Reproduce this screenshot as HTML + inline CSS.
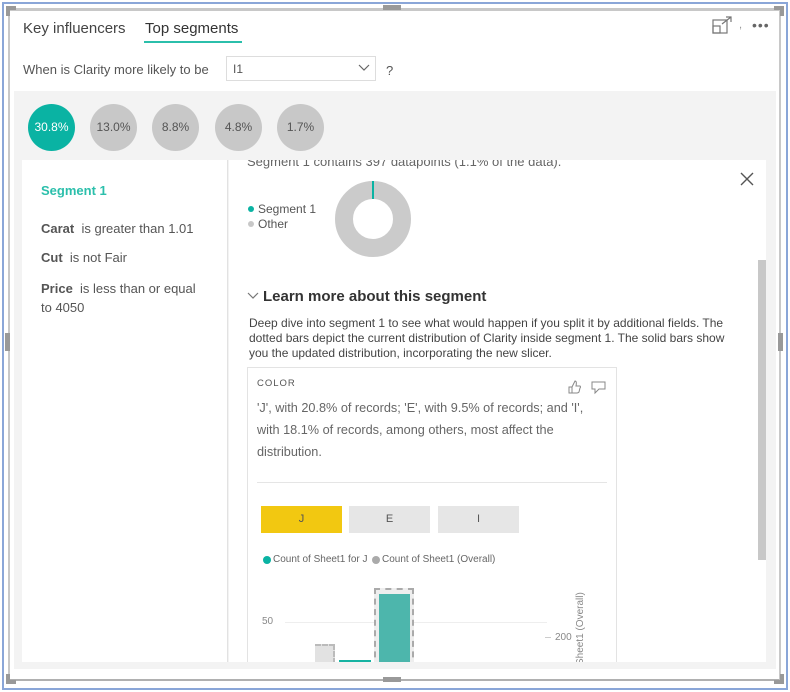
<!DOCTYPE html>
<html><head><style>
*{margin:0;padding:0;box-sizing:border-box}
body{width:790px;height:692px;background:#fff;position:relative;overflow:hidden;font-family:"Liberation Sans",sans-serif;color:#555}
.a{position:absolute}
.t{font-size:12px;white-space:nowrap}
</style></head><body>
<div class="a" style="left:2px;top:2px;width:786px;height:688px;border:2px solid #8aa6d8"></div>
<div class="a" style="left:8px;top:8px;width:773px;height:673px;border-top:3px solid #c8c8c8;border-left:2px solid #c8c8c8;border-right:2px solid #c8c8c8;border-bottom:2px solid #b0b0b0"></div>
<div class="a" style="left:6px;top:6px;width:10px;height:10px;border-top:4px solid #999;border-left:4px solid #999"></div>
<div class="a" style="left:774px;top:6px;width:10px;height:10px;border-top:4px solid #999;border-right:4px solid #999"></div>
<div class="a" style="left:6px;top:674px;width:10px;height:10px;border-bottom:4px solid #999;border-left:4px solid #999"></div>
<div class="a" style="left:774px;top:674px;width:10px;height:10px;border-bottom:4px solid #999;border-right:4px solid #999"></div>
<div class="a" style="left:383px;top:5px;width:18px;height:5px;background:#999"></div>
<div class="a" style="left:383px;top:677px;width:18px;height:5px;background:#999"></div>
<div class="a" style="left:5px;top:333px;width:5px;height:18px;background:#999"></div>
<div class="a" style="left:778px;top:333px;width:5px;height:18px;background:#999"></div>

<div class="a" style="left:23px;top:20px;font-size:15px;color:#444">Key influencers</div>
<div class="a" style="left:145px;top:20px;font-size:15px;color:#333">Top segments</div>
<div class="a" style="left:144px;top:41px;width:98px;height:2px;background:#2bbfab"></div>
<svg class="a" style="left:712px;top:15px" width="24" height="20"><rect x="1" y="5" width="14" height="13" fill="none" stroke="#777" stroke-width="1.2"/><rect x="1" y="11" width="7" height="7" fill="none" stroke="#777" stroke-width="1.2"/><path d="M10 9 L19 2 M14 2 H19 V7" fill="none" stroke="#777" stroke-width="1.2"/></svg>
<div class="a t" style="left:739px;top:19px;color:#999;font-size:11px">,</div>
<div class="a" style="left:752px;top:22px;font-size:14px;color:#666;letter-spacing:1px;line-height:6px">•••</div>

<div class="a t" style="left:23px;top:62px;font-size:13px;color:#555">When is Clarity more likely to be</div>
<div class="a" style="left:226px;top:56px;width:150px;height:25px;border:1px solid #ddd"></div>
<div class="a t" style="left:233px;top:62px;font-size:12px">I1</div>
<svg class="a" style="left:358px;top:64px" width="12" height="8"><path d="M1 1 L6 6 L11 1" fill="none" stroke="#666" stroke-width="1.2"/></svg>
<div class="a t" style="left:386px;top:63px;font-size:13px">?</div>

<div class="a" style="left:14px;top:91px;width:762px;height:578px;background:#f3f3f3"></div>
<div class="a" style="left:28px;top:104px;width:47px;height:47px;border-radius:50%;background:#0ab3a3;color:#fff;font-size:12px;text-align:center;line-height:47px">30.8%</div>
<div class="a" style="left:90px;top:104px;width:47px;height:47px;border-radius:50%;background:#c8c8c8;color:#555;font-size:12px;text-align:center;line-height:47px">13.0%</div>
<div class="a" style="left:152px;top:104px;width:47px;height:47px;border-radius:50%;background:#c8c8c8;color:#555;font-size:12px;text-align:center;line-height:47px">8.8%</div>
<div class="a" style="left:215px;top:104px;width:47px;height:47px;border-radius:50%;background:#c8c8c8;color:#555;font-size:12px;text-align:center;line-height:47px">4.8%</div>
<div class="a" style="left:277px;top:104px;width:47px;height:47px;border-radius:50%;background:#c8c8c8;color:#555;font-size:12px;text-align:center;line-height:47px">1.7%</div>

<div class="a" style="left:22px;top:160px;width:206px;height:502px;background:#fff;border-right:1px solid #e2e2e2"></div>
<div class="a t" style="left:41px;top:183px;font-size:13px;color:#2bbfab;font-weight:bold">Segment 1</div>
<div class="a t" style="left:41px;top:221px;font-size:13px"><b>Carat</b>&nbsp; is greater than 1.01</div>
<div class="a t" style="left:41px;top:250px;font-size:13px"><b>Cut</b>&nbsp; is not Fair</div>
<div class="a" style="left:41px;top:279px;font-size:13px;line-height:19px;width:165px"><b>Price</b>&nbsp; is less than or equal to 4050</div>

<div class="a" style="left:229px;top:160px;width:537px;height:502px;background:#fff;overflow:hidden">
 <div class="a t" style="left:18px;top:-6px;font-size:13px;color:#666">Segment 1 contains 397 datapoints (1.1% of the data).</div>
 <svg class="a" style="left:104px;top:20px" width="80" height="80"><circle cx="40" cy="39" r="29" fill="none" stroke="#cbcbcb" stroke-width="18"/><path d="M40 1 V19" stroke="#0ab3a3" stroke-width="2"/></svg>
 <div class="a" style="left:19px;top:46px;width:6px;height:6px;border-radius:50%;background:#0ab3a3"></div>
 <div class="a t" style="left:29px;top:42px;font-size:12px">Segment 1</div>
 <div class="a" style="left:19px;top:61px;width:6px;height:6px;border-radius:50%;background:#c8c8c8"></div>
 <div class="a t" style="left:29px;top:57px;font-size:12px">Other</div>
 <svg class="a" style="left:511px;top:12px" width="14" height="14"><path d="M1 1 L13 13 M13 1 L1 13" stroke="#555" stroke-width="1.4"/></svg>
 <div class="a" style="left:529px;top:100px;width:8px;height:300px;background:#c8c8c8"></div>
 <svg class="a" style="left:18px;top:132px" width="12" height="8"><path d="M1 1 L6 6 L11 1" fill="none" stroke="#777" stroke-width="1.2"/></svg>
 <div class="a t" style="left:34px;top:128px;font-size:15px;font-weight:bold;color:#333">Learn more about this segment</div>
 <div class="a" style="left:20px;top:156px;width:490px;font-size:12px;line-height:15px;color:#444">Deep dive into segment 1 to see what would happen if you split it by additional fields. The dotted bars depict the current distribution of Clarity inside segment 1. The solid bars show you the updated distribution, incorporating the new slicer.</div>
 <div class="a" style="left:18px;top:207px;width:370px;height:310px;border:1px solid #e3e3e3"></div>
 <div class="a t" style="left:28px;top:218px;font-size:9.5px;letter-spacing:1px;color:#555">COLOR</div>
 <svg class="a" style="left:338px;top:219px" width="44" height="16"><path d="M2 8 H5 V14 H2 Z M5 8 L8 2 Q10 2 9 7 H13 Q14 8 13 9 L12 13 Q11 14 10 14 H5" fill="none" stroke="#888" stroke-width="1"/><path d="M25 3 H38 V10 H32 L28 14 V10 H25 Z" fill="none" stroke="#888" stroke-width="1"/></svg>
 <div class="a" style="left:28px;top:237px;width:350px;font-size:12.7px;line-height:22px;color:#666">'J', with 20.8% of records; 'E', with 9.5% of records; and 'I', with 18.1% of records, among others, most affect the distribution.</div>
 <div class="a" style="left:28px;top:322px;width:350px;height:1px;background:#e5e5e5"></div>
 <div class="a" style="left:32px;top:346px;width:81px;height:27px;background:#f2c811;font-size:11px;text-align:center;line-height:27px;color:#555">J</div>
 <div class="a" style="left:120px;top:346px;width:81px;height:27px;background:#e6e6e6;font-size:11px;text-align:center;line-height:27px">E</div>
 <div class="a" style="left:209px;top:346px;width:81px;height:27px;background:#e6e6e6;font-size:11px;text-align:center;line-height:27px">I</div>
 <div class="a" style="left:34px;top:396px;width:8px;height:8px;border-radius:50%;background:#0ab3a3"></div>
 <div class="a t" style="left:44px;top:394px;font-size:10px;color:#666">Count of Sheet1 for J</div>
 <div class="a" style="left:143px;top:396px;width:8px;height:8px;border-radius:50%;background:#aaa"></div>
 <div class="a t" style="left:153px;top:394px;font-size:10px;color:#666">Count of Sheet1 (Overall)</div>
 <div class="a t" style="left:33px;top:456px;font-size:10px;color:#888">50</div>
 <div class="a" style="left:56px;top:462px;width:262px;height:1px;background:#eee"></div>
 <div class="a" style="left:316px;top:477px;width:6px;height:1px;background:#ccc"></div>
 <div class="a t" style="left:326px;top:472px;font-size:10px;color:#888">200</div>
 <div class="a t" style="left:346px;top:505px;font-size:10px;color:#888;transform:rotate(-90deg);transform-origin:0 0">Sheet1 (Overall)</div>
 <div class="a" style="left:86px;top:484px;width:20px;height:20px;background:#e2e2e2;border-top:2px dashed #bbb;border-right:2px dashed #bbb"></div>
 <div class="a" style="left:110px;top:500px;width:32px;height:4px;background:#17b3a2"></div>
 <div class="a" style="left:145px;top:428px;width:40px;height:80px;border:2px dashed #aaa;background:#eee"></div>
 <div class="a" style="left:150px;top:434px;width:31px;height:74px;background:#4db6ac"></div>
</div>
</body></html>
